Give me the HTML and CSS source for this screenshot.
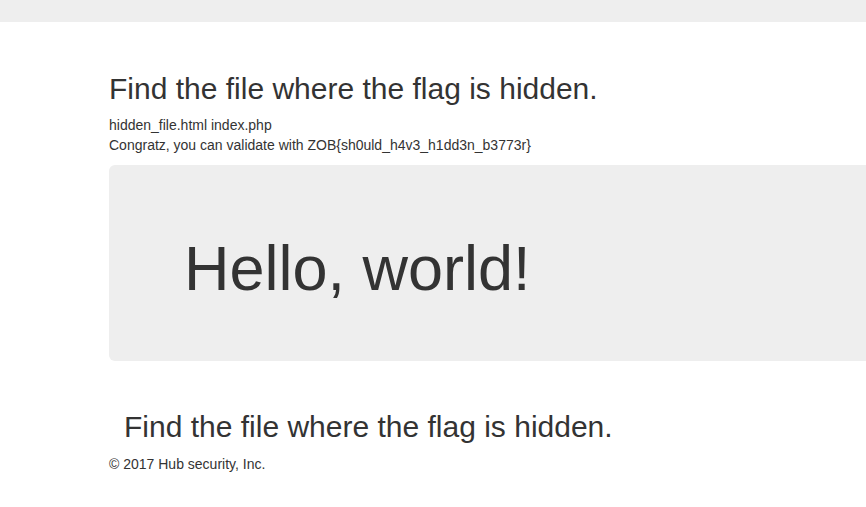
FILE: index.html
```html
<!DOCTYPE html>
<html lang="en">
<head>
<meta charset="utf-8">
<title>Find the file</title>
<link rel="stylesheet" href="styles.css">
</head>
<body>
<header class="navbar"></header>
<main class="container">
  <h2 class="title">Find the file where the flag is hidden.</h2>
  <p class="line">hidden_file.html index.php</p>
  <p class="line">Congratz, you can validate with ZOB{sh0uld_h4v3_h1dd3n_b3773r}</p>
  <section class="jumbotron">
    <div class="jumbo-inner">
      <h1 class="hello">Hello, world!</h1>
    </div>
  </section>
  <div class="row">
    <h2 class="title sub">Find the file where the flag is hidden.</h2>
  </div>
  <footer class="footer">
    <p class="line">&copy; 2017 Hub security, Inc.</p>
  </footer>
</main>
</body>
</html>
```
FILE: styles.css
```css
html, body {
  margin: 0;
  padding: 0;
  background: #fff;
  overflow: hidden;
}
body {
  font-family: "Liberation Sans", Arial, Helvetica, sans-serif;
  font-size: 14px;
  line-height: 20px;
  color: #333;
}
.navbar {
  height: 22px;
  background: #eee;
}
.container {
  margin-left: 94px;
  padding: 0 15px;
  width: 940px;
}
.title {
  font-size: 30px;
  font-weight: 400;
  line-height: 33px;
  margin: 50px 0 10px;
}
.line {
  margin: 0;
}
.jumbotron {
  margin-top: 10px;
  background: #eee;
  border-radius: 6px;
  padding: 48px 60px;
}
.jumbo-inner {
  padding: 0 15px;
}
.hello {
  font-size: 63px;
  font-weight: 400;
  line-height: 70px;
  margin: 20px 0 10px;
}
.row {
  padding-left: 15px;
}
.sub {
  margin: 49px 0 11px;
}
.footer {
  margin: 0;
}
```
